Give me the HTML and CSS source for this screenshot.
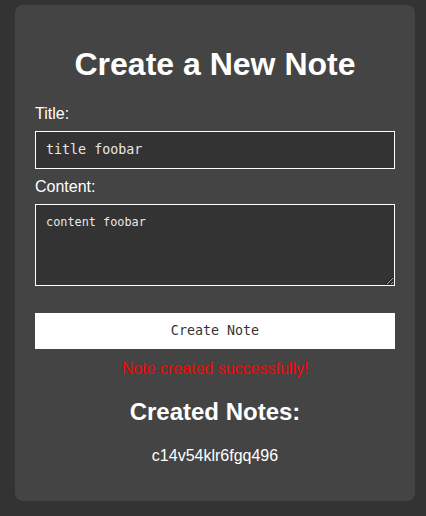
FILE: index.html
```html
<!DOCTYPE html>
<html>
<head>
<meta charset="utf-8">
<link rel="stylesheet" href="styles.css">
</head>
<body>
<div class="card">
  <h1 class="title">Create a New Note</h1>
  <form class="note-form">
    <label class="field-label" for="t">Title:</label>
    <input class="field-input" id="t" type="text" value="title foobar">
    <label class="field-label" for="c">Content:</label>
    <textarea class="field-area" id="c">content foobar</textarea>
    <button class="submit-btn" type="button">Create Note</button>
  </form>
  <div class="message">Note created successfully!</div>
  <h2 class="subtitle">Created Notes:</h2>
  <p class="note-item">c14v54klr6fgq496</p>
</div>
</body>
</html>
```
FILE: styles.css
```css
html, body {
  margin: 0;
  background: #333333;
}
body {
  padding: 5px 15px;
  font-family: "Liberation Sans", Arial, sans-serif;
}
.card {
  width: 400px;
  box-sizing: border-box;
  padding: 20px;
  background: #444444;
  border-radius: 8px;
  color: #ffffff;
}
.title {
  font-size: 32px;
  font-weight: bold;
  text-align: center;
  margin: 21.44px 0;
}
.note-form {
  display: flex;
  flex-direction: column;
  margin: 0;
}
.field-label {
  display: block;
  font-size: 16px;
  margin-bottom: 8px;
}
.field-input,
.field-area {
  display: block;
  width: 100%;
  box-sizing: border-box;
  padding: 10px;
  border: 1px solid #ffffff;
  border-radius: 0;
  background: #333333;
  color: #e8e8e8;
  font-family: "DejaVu Sans Mono", monospace;
  font-size: 13.333px;
  margin: 0 0 9px 0;
  outline: none;
}
.field-input {
  height: 38px;
}
.field-area {
  height: 82px;
  font-size: 11.85px;
  margin-bottom: 27px;
  resize: both;
}
.submit-btn {
  display: block;
  width: 100%;
  height: 36px;
  padding: 0 10px;
  border: none;
  border-radius: 0;
  background: #ffffff;
  color: #333333;
  font-family: "DejaVu Sans Mono", monospace;
  font-size: 13.333px;
  cursor: pointer;
}
.message {
  margin-top: 11px;
  color: #ff0000;
  text-align: center;
  font-size: 16px;
}
.subtitle {
  font-size: 24px;
  font-weight: bold;
  text-align: center;
  margin: 19.92px 0 21.4px;
}
.note-item {
  text-align: center;
  font-size: 16px;
  margin: 0 0 16px 0;
}
```
